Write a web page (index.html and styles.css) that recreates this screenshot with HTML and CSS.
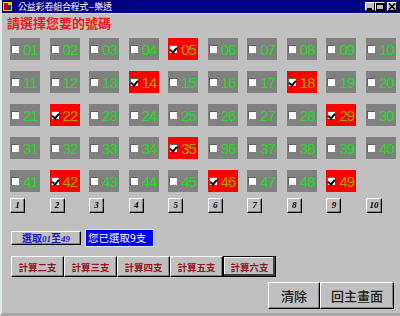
FILE: index.html
```html
<!DOCTYPE html>
<html lang="zh-TW">
<head>
    <meta charset="UTF-8">
    <title>公益彩卷組合程式--樂透</title>
    <link rel="stylesheet" href="styles.css">
</head>
<body>
    <div class="window">
        <!-- 標題列 -->
        <div class="titlebar">
            <svg class="app-icon" width="9" height="9" viewBox="0 0 9 9">
                <rect x="0" y="0" width="9" height="9" fill="#f0d000"/>
                <rect x="1" y="1" width="4" height="7" fill="#d00000"/>
                <rect x="5" y="3" width="3" height="5" fill="#2030a0"/>
            </svg>
            <span class="title">公益彩卷組合程式--樂透</span>
            <div class="controls">
                <span class="ctl"><svg width="8" height="7" viewBox="0 0 8 7"><rect x="1" y="5" width="5" height="2" fill="#000"/></svg></span>
                <span class="ctl"><svg width="8" height="7" viewBox="0 0 8 7"><rect x="0.5" y="0.5" width="7" height="6" fill="none" stroke="#000"/><rect x="0" y="0" width="8" height="2" fill="#000"/></svg></span>
                <span class="ctl close"><svg width="8" height="7" viewBox="0 0 8 7"><path d="M1 0.5 L7 6.5 M7 0.5 L1 6.5" stroke="#000" stroke-width="1.6"/></svg></span>
            </div>
        </div>

        <div class="client">
            <h1 class="prompt">請選擇您要的號碼</h1>

            <!-- 號碼盤 -->
            <div class="board">
                <div class="tile"><span class="box"></span><span class="num">01</span></div>
                <div class="tile"><span class="box"></span><span class="num">02</span></div>
                <div class="tile"><span class="box"></span><span class="num">03</span></div>
                <div class="tile"><span class="box"></span><span class="num">04</span></div>
                <div class="tile on"><span class="box"></span><span class="num">05</span></div>
                <div class="tile"><span class="box"></span><span class="num">06</span></div>
                <div class="tile"><span class="box"></span><span class="num">07</span></div>
                <div class="tile"><span class="box"></span><span class="num">08</span></div>
                <div class="tile"><span class="box"></span><span class="num">09</span></div>
                <div class="tile"><span class="box"></span><span class="num">10</span></div>

                <div class="tile"><span class="box"></span><span class="num">11</span></div>
                <div class="tile"><span class="box"></span><span class="num">12</span></div>
                <div class="tile"><span class="box"></span><span class="num">13</span></div>
                <div class="tile on"><span class="box"></span><span class="num">14</span></div>
                <div class="tile"><span class="box"></span><span class="num">15</span></div>
                <div class="tile"><span class="box"></span><span class="num">16</span></div>
                <div class="tile"><span class="box"></span><span class="num">17</span></div>
                <div class="tile on"><span class="box"></span><span class="num">18</span></div>
                <div class="tile"><span class="box"></span><span class="num">19</span></div>
                <div class="tile"><span class="box"></span><span class="num">20</span></div>

                <div class="tile"><span class="box"></span><span class="num">21</span></div>
                <div class="tile on"><span class="box"></span><span class="num">22</span></div>
                <div class="tile"><span class="box"></span><span class="num">23</span></div>
                <div class="tile"><span class="box"></span><span class="num">24</span></div>
                <div class="tile"><span class="box"></span><span class="num">25</span></div>
                <div class="tile"><span class="box"></span><span class="num">26</span></div>
                <div class="tile"><span class="box"></span><span class="num">27</span></div>
                <div class="tile"><span class="box"></span><span class="num">28</span></div>
                <div class="tile on"><span class="box"></span><span class="num">29</span></div>
                <div class="tile"><span class="box"></span><span class="num">30</span></div>

                <div class="tile"><span class="box"></span><span class="num">31</span></div>
                <div class="tile"><span class="box"></span><span class="num">32</span></div>
                <div class="tile"><span class="box"></span><span class="num">33</span></div>
                <div class="tile"><span class="box"></span><span class="num">34</span></div>
                <div class="tile on"><span class="box"></span><span class="num">35</span></div>
                <div class="tile"><span class="box"></span><span class="num">36</span></div>
                <div class="tile"><span class="box"></span><span class="num">37</span></div>
                <div class="tile"><span class="box"></span><span class="num">38</span></div>
                <div class="tile"><span class="box"></span><span class="num">39</span></div>
                <div class="tile"><span class="box"></span><span class="num">40</span></div>

                <div class="tile"><span class="box"></span><span class="num">41</span></div>
                <div class="tile on"><span class="box"></span><span class="num">42</span></div>
                <div class="tile"><span class="box"></span><span class="num">43</span></div>
                <div class="tile"><span class="box"></span><span class="num">44</span></div>
                <div class="tile"><span class="box"></span><span class="num">45</span></div>
                <div class="tile on"><span class="box"></span><span class="num">46</span></div>
                <div class="tile"><span class="box"></span><span class="num">47</span></div>
                <div class="tile"><span class="box"></span><span class="num">48</span></div>
                <div class="tile on"><span class="box"></span><span class="num">49</span></div>
            </div>

            <!-- 整欄選取按鈕 -->
            <div class="col-buttons">
                <button class="btn col">1</button>
                <button class="btn col">2</button>
                <button class="btn col">3</button>
                <button class="btn col">4</button>
                <button class="btn col">5</button>
                <button class="btn col">6</button>
                <button class="btn col">7</button>
                <button class="btn col">8</button>
                <button class="btn col">9</button>
                <button class="btn col wide">10</button>
            </div>

            <div class="select-row">
                <button class="btn select-all">選取<i>01</i>至<i>49</i></button>
                <span class="count">您已選取9支</span>
            </div>

            <div class="calc-row">
                <button class="btn calc">計算二支</button>
                <button class="btn calc">計算三支</button>
                <button class="btn calc">計算四支</button>
                <button class="btn calc">計算五支</button>
                <button class="btn calc focus">計算六支</button>
            </div>

            <div class="bottom-row">
                <button class="btn big clear">清除</button>
                <button class="btn big home">回主畫面</button>
            </div>
        </div>
    </div>
</body>
</html>
```

FILE: styles.css
```css
body {
    margin: 0;
    padding: 0;
    background-color: #c0c0c0;
    font-family: "Noto Sans CJK TC", sans-serif;
}
.window {
    width: 400px;
    height: 316px;
    box-sizing: border-box;
    background-color: #c0c0c0;
    border-left: 2px solid #dfe8e8;
    border-bottom: 3px solid #a8a8a8;
    overflow: hidden;
}

/* 標題列 */
.titlebar {
    height: 13px;
    background-color: #000080;
    display: flex;
    align-items: center;
    padding-left: 1px;
    border-bottom: 1px solid #d8d8d8;
}
.app-icon {
    margin-right: 6px;
}
.title {
    color: #fff;
    font-size: 9px;
    line-height: 13px;
    letter-spacing: -0.2px;
}
.controls {
    margin-left: auto;
    margin-right: 3px;
    display: flex;
}
.ctl {
    width: 10px;
    height: 9px;
    box-sizing: border-box;
    background-color: #c0c0c0;
    border: 1px solid;
    border-color: #fff #000 #000 #fff;
    display: flex;
    align-items: center;
    justify-content: center;
}
.ctl svg {
    display: block;
}
.ctl.close {
    margin-left: 2px;
}

.client {
    padding-left: 8px;
}
.prompt {
    margin: 1px 0 7px -3px;
    font-size: 13px;
    line-height: 16px;
    font-weight: bold;
    color: #f01818;
}

/* 號碼盤 */
.board, .col-buttons {
    display: grid;
    grid-template-columns: repeat(10, 30px);
    justify-content: space-between;
    width: 386px;
}
.board {
    row-gap: 11px;
}
.tile {
    height: 22px;
    background-color: #808080;
    display: flex;
    align-items: center;
}
.tile.on {
    background-color: #ff0000;
}
.box {
    position: relative;
    flex: none;
    width: 8px;
    height: 8px;
    margin-left: 1px;
    box-sizing: border-box;
    background-color: #fff;
    border-top: 1px solid #606060;
    border-left: 1px solid #606060;
}
.tile.on .box::after {
    content: "";
    position: absolute;
    left: 1px;
    top: 0;
    width: 3px;
    height: 5px;
    border-right: 2px solid #000;
    border-bottom: 2px solid #000;
    transform: rotate(40deg);
}
.num {
    margin-left: 4px;
    font-family: "Liberation Sans", Arial, sans-serif;
    font-size: 15px;
    letter-spacing: -1px;
    color: #22dd22;
    white-space: nowrap;
}
.tile.on .num {
    color: #a8a000;
}

/* 按鈕 */
.btn {
    margin: 0;
    padding: 0;
    background-color: #c0c0c0;
    border: 1px solid;
    border-color: #fff #000 #000 #fff;
    box-shadow: inset -1px -1px #808080;
    cursor: pointer;
}
.col-buttons {
    margin-top: 6px;
}
.col {
    width: 15px;
    height: 15px;
    font-family: "Liberation Serif", serif;
    font-style: italic;
    font-weight: bold;
    font-size: 9px;
    line-height: 13px;
    color: #000;
}
.col.wide {
    width: 16px;
}

.select-row {
    margin-top: 16px;
    display: flex;
    align-items: center;
}
.select-all {
    width: 70px;
    height: 14px;
    margin-left: 1px;
    font-family: "Noto Sans CJK TC", sans-serif;
    font-size: 10px;
    line-height: 12px;
    font-weight: bold;
    color: #1818c8;
}
.select-all i {
    font-family: "Liberation Serif", serif;
    font-size: 9px;
}
.count {
    margin-left: 4px;
    width: 69px;
    height: 18px;
    box-sizing: border-box;
    background-color: #0000ff;
    border: 1px solid #e0e0e0;
    color: #fff;
    font-size: 10.5px;
    line-height: 16px;
    padding-left: 2px;
}

.calc-row {
    margin-top: 9px;
    display: flex;
    padding-left: 1px;
}
.calc {
    width: 53px;
    height: 21px;
    font-family: "Noto Sans CJK TC", sans-serif;
    font-size: 9.5px;
    font-weight: bold;
    color: #901818;
}
.calc.focus {
    outline: 1px solid #000;
    outline-offset: -1px;
    box-shadow: inset -2px -2px #404040, inset 1px 1px #fff;
}

.bottom-row {
    margin-top: 5px;
    display: flex;
    justify-content: flex-end;
    padding-right: 6px;
}
.big {
    height: 27px;
    font-family: "Noto Sans CJK TC", sans-serif;
    font-size: 13px;
    font-weight: 500;
    color: #202020;
}
.clear {
    width: 52px;
}
.home {
    width: 74px;
}
```
